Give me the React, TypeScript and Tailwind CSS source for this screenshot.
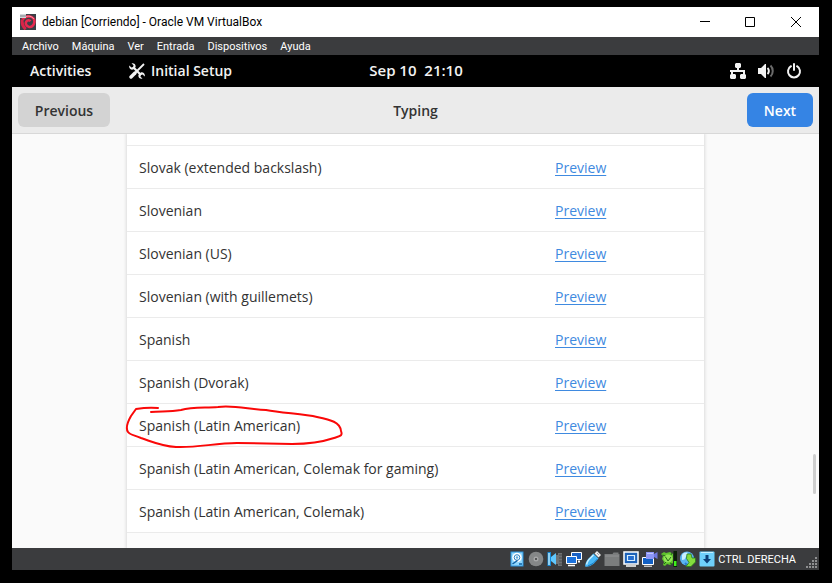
import type { ReactNode } from 'react';

const GNOME = "font-['Open_Sans',sans-serif]";
const SYSTEM = "font-['Roboto',sans-serif]";

const menus = ['Archivo', 'Máquina', 'Ver', 'Entrada', 'Dispositivos', 'Ayuda'];

const layouts = [
  'Slovak (extended backslash)',
  'Slovenian',
  'Slovenian (US)',
  'Slovenian (with guillemets)',
  'Spanish',
  'Spanish (Dvorak)',
  'Spanish (Latin American)',
  'Spanish (Latin American, Colemak for gaming)',
  'Spanish (Latin American, Colemak)',
];

const circled = 'Spanish (Latin American)';

function Icon({ children, label }: { children: ReactNode; label?: string }) {
  return (
    <svg className="size-4 shrink-0" viewBox="0 0 16 16" role="img" aria-label={label}>
      {children}
    </svg>
  );
}

function DebianIcon() {
  return (
    <Icon label="Debian">
      <rect width="16" height="16" fill="#3b3f45" />
      <path
        d="M2.500 5.500C4 3 7 2 10 2.500c3.200.5 4.800 3 4.300 6-.5 3.200-3 5-5.600 4.300C6 12 5.200 9.500 6.300 7.600 7.300 6 9.500 5.900 10.400 7.300"
        fill="none"
        stroke="#e8294f"
        strokeWidth="2.600"
      />
      <path d="M2.300 5.500c-.8 4 .2 7 3.400 9.700" fill="none" stroke="#d92448" strokeWidth="3" />
      <path d="M5 3C8 1.500 12 2 13.800 5" fill="none" stroke="#f9a0b0" strokeWidth=".9" />
      <rect width="6" height="4" fill="#d3d6da" />
      <path d="M1 1v2M3 1v2M5 1v2" stroke="#666b72" strokeWidth=".8" />
    </Icon>
  );
}

function TitleBar() {
  return (
    <div className={`${SYSTEM} flex h-[30px] shrink-0 items-center bg-white pl-2 text-black`}>
      <DebianIcon />
      <span className="ml-[6px] flex-1 truncate text-[12px] leading-4">debian [Corriendo] - Oracle VM VirtualBox</span>
      <button className="flex h-full w-[46px] items-center justify-center" aria-label="Minimize">
        <svg className="size-[12px]" viewBox="0 0 12 12" stroke="#000">
          <path d="M2 5.500h10" />
        </svg>
      </button>
      <button className="flex h-full w-[46px] items-center justify-center" aria-label="Maximize">
        <svg className="size-[12px]" viewBox="0 0 12 12" stroke="#000" fill="none">
          <path d="M1.500 1.500h9v9h-9z" />
        </svg>
      </button>
      <button className="flex h-full w-[46px] items-center justify-center" aria-label="Close">
        <svg className="size-[12px]" viewBox="0 0 12 12" stroke="#000">
          <path d="M1 1l10 10M11 1L1 11" />
        </svg>
      </button>
    </div>
  );
}

function MenuBar() {
  return (
    <nav className={`${SYSTEM} flex h-[18px] shrink-0 items-center gap-[13px] bg-[#3b3c3e] pt-0.5 pl-[10px] text-[11px] leading-4 text-white`}>
      {menus.map((m) => (
        <button key={m}>{m}</button>
      ))}
    </nav>
  );
}

function TopBar() {
  return (
    <div className="grid h-8 shrink-0 grid-cols-[1fr_auto_1fr] items-center bg-black pr-[17px] pl-[18px] text-[14px] leading-5 font-semibold text-[#f2f2f2]">
      <div className="flex items-center">
        <button className="w-[99px] text-left">Activities</button>
        <button className="flex items-center gap-[6px]">
          <Icon>
            <path d="M4.500 4.500l7.500 7.500" stroke="#f2f2f2" strokeWidth="2.200" />
            <path d="M15 1L6 10" stroke="#f2f2f2" strokeWidth="1.800" />
            <path d="M6 10l-4 4" stroke="#f2f2f2" strokeWidth="3.400" strokeLinecap="round" />
            <path
              d="M2.500.3L4.600 2.400 4 4 2.400 4.600.3 2.500C-.4 5 1.600 7.200 4.200 6.500l2.300-2.300C7.200 1.600 5-.4 2.500.3zM9.500 11.800l2.300-2.300c2.600-.7 4.600 1.500 3.900 4l-2.100-2.100-1.600.6-.6 1.600 2.100 2.100c-2.500.7-4.700-1.300-4-3.900z"
              fill="#f2f2f2"
            />
          </Icon>
          Initial Setup
        </button>
      </div>
      <button className="pb-0.5 text-[15px] whitespace-pre">Sep 10  21:10</button>
      <div className="flex items-center justify-end gap-3">
        <Icon label="Wired network">
          <path
            d="M5 1l1-1h4l1 1v3l-1 1H9v2h6v4l1 1v3l-1 1h-4l-1-1v-3l1-1h2V9H3v2h2l1 1v3l-1 1H1l-1-1v-3l1-1V9H0V7h7V5H6L5 4z"
            fill="#f2f2f2"
          />
        </Icon>
        <Icon label="Volume">
          <path d="M0 5h3l4-4h1v14H7l-4-4H0z" fill="#f2f2f2" />
          <path d="M9.500 5c1.800 1.500 1.800 4.500 0 6" fill="none" stroke="#f2f2f2" strokeWidth="2" />
          <path d="M12.500 2.500c3 3 3 8 0 11" fill="none" stroke="#6b6b6b" strokeWidth="2" />
        </Icon>
        <Icon label="Power">
          <path d="M5 3.200a6 6 0 1 0 6 0M8 1v6" fill="none" stroke="#f2f2f2" strokeWidth="2" strokeLinecap="round" />
        </Icon>
      </div>
    </div>
  );
}

function HeaderBar() {
  return (
    <header className="grid h-[47px] shrink-0 grid-cols-[1fr_auto_1fr] items-center border-b border-[#d8d8d8] bg-[#ebebeb] px-[6px] text-[14px] leading-5 font-semibold text-[#333]">
      <button className="h-[34px] w-[92px] justify-self-start rounded-md bg-[#d3d3d3] pt-0.5">Previous</button>
      <h1 className="pt-0.5">Typing</h1>
      <button className="h-[34px] w-[66px] justify-self-end rounded-md bg-[#3584e4] pt-0.5 text-white">Next</button>
    </header>
  );
}

function LayoutRow({ name }: { name: string }) {
  return (
    <li className="relative flex h-[43px] shrink-0 items-center border-b border-[#ebebeb] px-3 pt-0.5">
      <span className="flex-1">{name}</span>
      <a href="#preview" className="w-[137px] text-[#3f8ae0] underline underline-offset-2" aria-label={`Preview ${name}`}>
        Preview
      </a>
      {name === circled && (
        <svg
          className="pointer-events-none absolute top-0 left-0 h-[43px] w-[220px] overflow-visible"
          viewBox="0 0 220 43"
          fill="none"
          stroke="#fa0808"
          strokeWidth="2"
          strokeLinecap="round"
          strokeLinejoin="round"
        >
          <path d="M31 4C22 3 15 4 9 5L4 12C0 19-1 25 1 28C3 31 7 31 14 34C26 38 34 42 49 43C70 44 88 39 110 39L165 40C185 40 198 37 207 34C213 32 216 32 214 27C213 18 204 16 190 13C177 10 155 9 139 6C121 5 106 1 91 3C77 4 65 3 54 6C42 8 34 7 24 8" />
        </svg>
      )}
    </li>
  );
}

function LayoutList() {
  return (
    <main className="relative min-h-0 flex-1 overflow-hidden bg-[#fafafa]">
      <ul className="mx-auto flex h-full w-[577px] max-w-full flex-col bg-white text-[14px] leading-5 text-[#333] shadow-[0_0_3px_1px_rgba(0,0,0,0.12)]">
        <li className="h-3 shrink-0 border-b border-[#ebebeb]" aria-hidden="true" />
        {layouts.map((name) => (
          <LayoutRow key={name} name={name} />
        ))}
        <li className="min-h-0 flex-1 bg-[#fcfcfc]" aria-hidden="true" />
      </ul>
      <div className="absolute right-[3px] bottom-[54px] h-10 w-[3px] rounded-full bg-[#cecece]" />
    </main>
  );
}

function StatusBar() {
  return (
    <footer className="relative flex h-[22px] shrink-0 items-center justify-end gap-[3px] bg-[#3b3c3e] pr-[23px]">
      <Icon label="Hard disk">
        <path d="M1.500.5h13v15h-13z" fill="#2b93dd" />
        <path d="M2.500 1.500h11v13h-11z" fill="#8fd6fc" />
        <circle cx="8" cy="6.500" r="4.700" fill="#fff" />
        <circle cx="8" cy="6.500" r="2.800" fill="none" stroke="#2a7fc0" />
        <circle cx="8" cy="6.500" r="1.200" fill="#5aa9de" />
        <path d="M3.500 13l5-3.500" stroke="#0d5fa3" strokeWidth="1.500" />
        <path d="M10 13h3" stroke="#0d5fa3" strokeWidth="1.500" />
      </Icon>
      <Icon label="Optical disc">
        <circle cx="8" cy="8" r="7.300" fill="#858788" />
        <circle cx="8" cy="8" r="2.500" fill="#a6a7a8" />
        <circle cx="8" cy="8" r="1" fill="#3b3c3e" />
      </Icon>
      <Icon label="Audio">
        <path d="M8 4h3V2h4v13h-4v-2H8z" fill="#707274" />
        <path d="M12 4h3M12 7h3M12 10h3M12 13h3" stroke="#484a4b" />
        <path d="M.5 1H4v14H.5z" fill="#1589d8" />
        <path d="M4 6l5-4v12l-5-4z" fill="#5fc8ff" />
        <path d="M2 2v12" stroke="#b9eaff" strokeWidth="1.500" />
      </Icon>
      <Icon label="Network">
        <path d="M5.500 1.500h10v7h-10z" fill="#1a62c5" stroke="#fff" />
        <path d="M13 9.500v2" stroke="#fff" strokeWidth="2" />
        <path d="M.5 5.500h10v7h-10z" fill="#1d73dd" stroke="#fff" />
        <path d="M2 14.500h7" stroke="#fff" strokeWidth="1.500" />
      </Icon>
      <Icon label="USB">
        <path d="M9.500 2.500L12 0l4 4-2.500 2.500z" fill="#ececec" />
        <path d="M12 2l2 2" stroke="#777" strokeDasharray="1 1" />
        <path d="M8.500 2.500l5 5L9 12.500C6.500 15 1 16.500.3 15.500S1 10 3.500 7.500z" fill="#48b8f8" />
        <path d="M8.500 4L4 8.500c-1.500 1.500-2 3-2.500 5" fill="none" stroke="#c8efff" strokeWidth="1.500" />
        <path d="M12.500 8l-4.500 4.500-5 2.500" fill="none" stroke="#1677bd" />
      </Icon>
      <Icon label="Shared folders">
        <path d="M.5 3h8l1-1.500h5V3h1v12H.5z" fill="#7b7d7e" />
        <path d="M1 5h14" stroke="#929394" />
      </Icon>
      <Icon label="Display">
        <path d="M1 1h14v12H1z" fill="#1d62b8" stroke="#fff" strokeWidth="1.500" />
        <path d="M4.500 4.500h7v5h-7z" fill="#236ccf" stroke="#d8efff" strokeWidth="1.200" />
        <path d="M3 15h10" stroke="#fff" strokeWidth="1.500" />
      </Icon>
      <Icon label="Recording">
        <path d="M.5 6.500h11v7H.5z" fill="#1260c4" stroke="#fff" />
        <path d="M2 15.200h8" stroke="#fff" />
        <path d="M4 1h8v7H4z" fill="#8d96f5" />
        <path d="M12 3l3.500-2v7L12 6z" fill="#6f78e0" />
        <path d="M5 2.500h6" stroke="#c0c6ff" />
      </Icon>
      <Icon label="Processor">
        <path d="M0 3l3-2 2 1 4-1 3 2v9l-3 2-3-1-2 2-2-1 1-3-2-3 1-3z" fill="#5fc42d" />
        <ellipse cx="7" cy="7.500" rx="4.500" ry="4" fill="#93e656" />
        <path d="M4.500 6l2.500 4 3-4M1.500 4l3 1M3 13l2-2M9 12l2 1M10 4l1-2" fill="none" stroke="#246b16" />
        <path d="M12.500 0H16v16h-3.500z" fill="#0b1f08" />
        <path d="M13 10h2.500v5H13z" fill="#3ff01d" />
      </Icon>
      <Icon label="Mouse integration">
        <circle cx="7" cy="7.500" r="7" fill="#5ab4f2" />
        <path d="M2 4c1.500-2.500 4-3 6-2L4.500 8.500 2 9z" fill="#c9eeff" />
        <path d="M5 12l2 2" stroke="#2a7bd0" strokeWidth="2" />
        <path d="M7 3h4l1 4h3.500v4L11 15.500H6l3-4-2.500-4z" fill="#84dc3e" stroke="#2a7d1a" strokeWidth=".8" />
      </Icon>
      <Icon label="Keyboard capture">
        <rect x=".5" y=".5" width="15" height="15" rx="1" fill="#6fd0fb" />
        <path d="M2 1.500h12" stroke="#c5efff" />
        <path d="M6.500 4h3v4H12l-4 4.500L4 8h2.500z" fill="#0d3f78" />
      </Icon>
      <span className={`${SYSTEM} pt-0.5 text-[11px] leading-4 text-white`}>CTRL DERECHA</span>
      <svg className="absolute right-px bottom-px size-3" viewBox="0 0 12 12" fill="#8f9091" aria-hidden="true">
        <path d="M9 0h2v2H9zM6 3h2v2H6zM9 3h2v2H9zM3 6h2v2H3zM6 6h2v2H6zM9 6h2v2H9zM0 9h2v2H0zM3 9h2v2H3zM6 9h2v2H6zM9 9h2v2H9z" />
      </svg>
    </footer>
  );
}

export default function App() {
  return (
    <div className={`${GNOME} flex h-screen flex-col bg-black pt-[7px] pr-[13px] pb-[13px] pl-3`}>
      <TitleBar />
      <MenuBar />
      <TopBar />
      <HeaderBar />
      <LayoutList />
      <StatusBar />
    </div>
  );
}
